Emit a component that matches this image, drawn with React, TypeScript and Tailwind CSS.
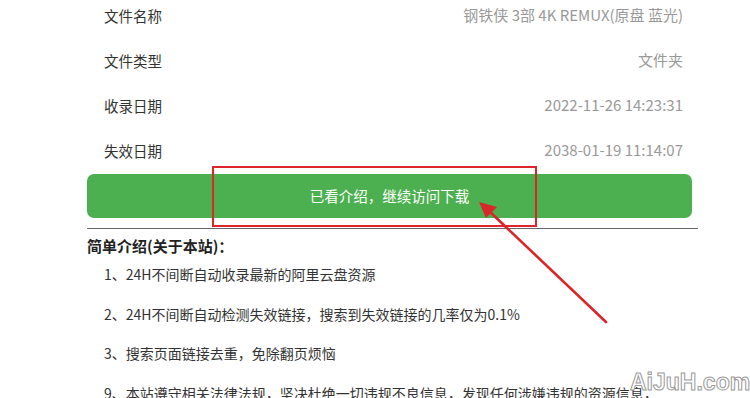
export default function App() {
  const rows = [
    { label: "文件名称", value: "钢铁侠 3部 4K REMUX(原盘 蓝光)" },
    { label: "文件类型", value: "文件夹" },
    { label: "收录日期", value: "2022-11-26 14:23:31" },
    { label: "失效日期", value: "2038-01-19 11:14:07" },
  ];

  const items = [
    "1、24H不间断自动收录最新的阿里云盘资源",
    "2、24H不间断自动检测失效链接，搜索到失效链接的几率仅为0.1%",
    "3、搜索页面链接去重，免除翻页烦恼",
    "9、本站遵守相关法律法规，坚决杜绝一切违规不良信息，发现任何涉嫌违规的资源信息，",
  ];

  return (
    <div
      className="relative w-[750px] h-[398px] overflow-hidden bg-white"
      style={{ fontFamily: '"Noto Sans CJK SC", "Noto Sans", sans-serif' }}
    >
      <div className="ml-[87px] w-[611px] -mt-[7px]">
        {/* Info rows */}
        <div className="flex flex-col">
          {rows.map((r) => (
            <div key={r.label} className="h-[45px] flex items-center justify-between pl-[17px] pr-[15px] text-[14.5px]">
              <span className="text-[#333]">{r.label}</span>
              <span className="text-[#999] text-[15px]">{r.value}</span>
            </div>
          ))}
        </div>

        {/* Button */}
        <button className="mt-[1px] w-[605px] h-[44px] rounded-[7px] bg-[#4caf50] text-white text-[14.5px] flex items-center justify-center">
          已看介绍，继续访问下载
        </button>

        <div className="mt-[10px] h-px bg-[#666]" />

        {/* Intro */}
        <div className="pt-[6px]">
          <div className="text-[15px] font-bold text-[#222] h-[22px] flex items-center">简单介绍(关于本站)：</div>
          <div className="flex flex-col pl-[17px] -mt-[2px] text-[14px] text-[#333]">
            {items.map((t) => (
              <div key={t} className="h-[39.5px] flex items-center whitespace-nowrap">
                {t}
              </div>
            ))}
          </div>
        </div>
      </div>

      {/* Annotation */}
      <div className="absolute left-[212px] top-[166px] w-[325px] h-[61px] border-2 border-[#e0242b]" />
      <svg className="absolute inset-0" width="750" height="398" viewBox="0 0 750 398">
        <line x1="606" y1="322" x2="488" y2="210" stroke="#d9262b" strokeWidth="2.6" strokeLinecap="round" />
        <polygon points="479,202 497,207 486,218" fill="#d9262b" />
      </svg>

      {/* Watermark */}
      <div
        className="absolute left-[630px] top-[365px] text-[23px] font-bold tracking-[0px] text-white [-webkit-text-stroke:1px_#9a9a9a]"
        style={{ fontFamily: '"Liberation Sans", sans-serif' }}
      >
        AiJuH.com
      </div>
    </div>
  );
}
